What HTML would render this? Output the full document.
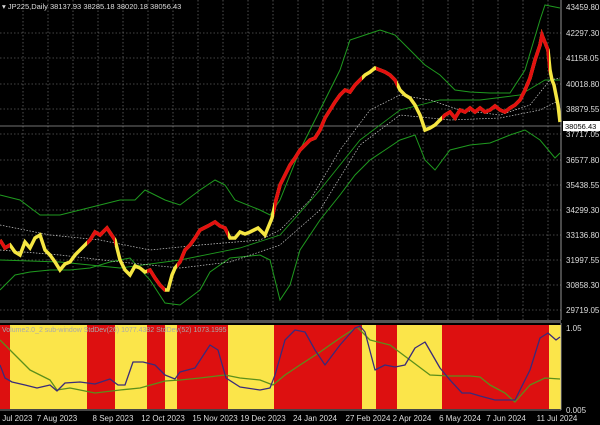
<!DOCTYPE html>
<html><head><meta charset="utf-8"><style>
body{margin:0;background:#000;width:600px;height:425px;overflow:hidden;font-family:"Liberation Sans",sans-serif}
svg{display:block}
text{font-family:"Liberation Sans",sans-serif;font-size:8px;fill:#ddd}
</style></head><body>
<svg width="600" height="425" viewBox="0 0 600 425">
<defs>
<clipPath id="red"><rect x="0" y="0" width="10" height="320"/><rect x="87" y="0" width="28" height="320"/><rect x="147" y="0" width="18" height="320"/><rect x="177" y="0" width="51" height="320"/><rect x="274" y="0" width="88" height="320"/><rect x="376" y="0" width="21" height="320"/><rect x="442" y="0" width="107" height="320"/></clipPath>
<clipPath id="main"><rect x="0" y="0" width="561" height="320"/></clipPath>
</defs>
<rect width="600" height="425" fill="#000"/>
<g stroke="#aaa" stroke-width="0.6" stroke-dasharray="1.5,2" opacity="0.8">
<line x1="0" y1="33" x2="561" y2="33"/><line x1="0" y1="58" x2="561" y2="58"/><line x1="0" y1="84" x2="561" y2="84"/><line x1="0" y1="109" x2="561" y2="109"/><line x1="0" y1="134" x2="561" y2="134"/><line x1="0" y1="160" x2="561" y2="160"/><line x1="0" y1="185" x2="561" y2="185"/><line x1="0" y1="210" x2="561" y2="210"/><line x1="0" y1="235" x2="561" y2="235"/><line x1="0" y1="260" x2="561" y2="260"/><line x1="0" y1="285" x2="561" y2="285"/><line x1="0" y1="310" x2="561" y2="310"/>
<line x1="23" y1="0" x2="23" y2="320"/><line x1="48" y1="0" x2="48" y2="320"/><line x1="73" y1="0" x2="73" y2="320"/><line x1="98" y1="0" x2="98" y2="320"/><line x1="123" y1="0" x2="123" y2="320"/><line x1="148" y1="0" x2="148" y2="320"/><line x1="173" y1="0" x2="173" y2="320"/><line x1="198" y1="0" x2="198" y2="320"/><line x1="223" y1="0" x2="223" y2="320"/><line x1="248" y1="0" x2="248" y2="320"/><line x1="273" y1="0" x2="273" y2="320"/><line x1="298" y1="0" x2="298" y2="320"/><line x1="323" y1="0" x2="323" y2="320"/><line x1="348" y1="0" x2="348" y2="320"/><line x1="373" y1="0" x2="373" y2="320"/><line x1="398" y1="0" x2="398" y2="320"/><line x1="423" y1="0" x2="423" y2="320"/><line x1="448" y1="0" x2="448" y2="320"/><line x1="473" y1="0" x2="473" y2="320"/><line x1="498" y1="0" x2="498" y2="320"/><line x1="523" y1="0" x2="523" y2="320"/><line x1="548" y1="0" x2="548" y2="320"/>
</g>
<line x1="0" y1="126" x2="561" y2="126" stroke="#999" stroke-width="0.8"/>
<g clip-path="url(#main)" fill="none">
<polyline stroke="#1f9a1f" stroke-width="1" points="0,195 20,200 40,215 60,215 80,210 100,205 120,200 135,200 145,190 165,200 180,205 200,190 215,180 225,185 235,200 260,210 270,215 280,200 300,150 320,110 340,70 350,40 365,35 380,30 395,35 410,50 425,65 440,75 455,90 470,92 490,93 510,93 525,70 540,20 545,5 555,7 560,8"/>
<polyline stroke="#1f9a1f" stroke-width="1" points="0,290 15,275 30,272 50,270 70,270 90,268 110,262 130,258 150,280 165,303 180,305 200,290 210,272 230,258 260,255 270,260 280,300 290,285 300,250 320,220 340,195 355,175 370,160 385,150 400,140 415,135 425,160 435,170 450,150 470,145 490,143 510,135 525,130 540,140 555,158 560,153"/>
<polyline stroke="#1f9a1f" stroke-width="0.9" points="0,260 60,262 120,268 180,260 240,248 280,235 320,190 360,140 400,110 440,100 480,100 520,95 545,80 560,80"/>
<polyline stroke="#ccc" stroke-width="0.7" stroke-dasharray="1.5,1.5" points="0,225 50,235 100,240 150,250 200,245 260,240 280,230 310,200 340,150 370,110 400,95 430,100 460,110 500,115 530,105 550,80 560,78"/>
<polyline stroke="#ccc" stroke-width="0.7" stroke-dasharray="1.5,1.5" points="0,250 60,255 120,262 180,268 230,262 280,245 320,210 360,145 400,115 450,120 500,118 540,110 560,100"/>
</g>
<g fill="none" stroke-linejoin="miter" stroke-width="3.5">
<polyline stroke="#f5e642" points="0,240 5,248 10,245 15,252 20,255 25,242 30,248 35,238 40,235 45,250 50,255 55,262 60,270 65,264 70,262 75,255 80,250 85,245 90,240 95,232 100,235 107,228 115,240 120,260 125,270 130,275 135,266 140,268 145,272 150,270 155,278 160,285 165,290 168,290 172,275 175,268 180,262 185,250 190,245 195,238 200,230 208,226 215,222 220,226 225,228 230,238 235,238 240,232 245,234 250,232 258,228 265,235 272,218 276,200 280,185 285,175 290,165 295,158 300,150 305,145 310,140 315,138 320,130 325,118 330,110 335,102 340,95 345,90 350,92 355,85 360,80 365,75 370,72 375,68 380,70 385,72 390,75 395,80 400,90 405,95 410,98 415,105 420,115 425,130 430,128 435,125 440,120 445,115 450,112 455,118 460,110 465,112 470,108 475,112 480,108 485,112 490,110 495,106 500,110 505,112 510,108 515,105 520,100 525,90 530,78 535,60 540,45 542,35 546,45 548,50 550,70 552,80 554,85 556,95 558,105 560,122"/>
<polyline stroke="#e31010" clip-path="url(#red)" points="0,240 5,248 10,245 15,252 20,255 25,242 30,248 35,238 40,235 45,250 50,255 55,262 60,270 65,264 70,262 75,255 80,250 85,245 90,240 95,232 100,235 107,228 115,240 120,260 125,270 130,275 135,266 140,268 145,272 150,270 155,278 160,285 165,290 168,290 172,275 175,268 180,262 185,250 190,245 195,238 200,230 208,226 215,222 220,226 225,228 230,238 235,238 240,232 245,234 250,232 258,228 265,235 272,218 276,200 280,185 285,175 290,165 295,158 300,150 305,145 310,140 315,138 320,130 325,118 330,110 335,102 340,95 345,90 350,92 355,85 360,80 365,75 370,72 375,68 380,70 385,72 390,75 395,80 400,90 405,95 410,98 415,105 420,115 425,130 430,128 435,125 440,120 445,115 450,112 455,118 460,110 465,112 470,108 475,112 480,108 485,112 490,110 495,106 500,110 505,112 510,108 515,105 520,100 525,90 530,78 535,60 540,45 542,35 546,45 548,50 550,70 552,80 554,85 556,95 558,105 560,122"/>
</g>
<line x1="561" y1="0" x2="561" y2="320" stroke="#bbb" stroke-width="0.8"/>
<rect x="0" y="320" width="561" height="3" fill="#555"/>
<rect x="0" y="325" width="561" height="84" fill="#dd1010"/>
<g fill="#fbe54a"><rect x="10" y="325" width="77" height="84"/><rect x="115" y="325" width="32" height="84"/><rect x="165" y="325" width="12" height="84"/><rect x="228" y="325" width="46" height="84"/><rect x="362" y="325" width="14" height="84"/><rect x="397" y="325" width="45" height="84"/><rect x="549" y="325" width="12" height="84"/></g>
<g fill="none" stroke-width="1.3" stroke-linejoin="round">
<polyline stroke="#5b8f1a" points="0,340 15,355 30,370 50,380 57,390 70,388 95,393 120,390 140,388 165,381 180,380 200,378 225,375 240,378 260,380 273,385 285,375 300,365 320,352 340,338 357,327 370,340 390,345 410,360 430,375 450,376 470,376 480,377 490,385 505,393 515,402 530,385 545,378 560,379"/>
<polyline stroke="#3a2a7a" points="0,365 5,378 12,382 25,385 37,388 50,385 57,391 65,383 80,382 95,384 110,379 118,385 125,385 133,362 143,362 155,365 165,375 175,379 180,372 195,368 210,345 218,350 226,378 240,387 260,390 270,388 275,375 285,340 295,330 305,332 315,350 325,365 340,345 355,328 360,326 365,332 375,370 385,365 395,367 405,365 415,348 425,342 440,368 450,380 462,393 470,393 480,396 495,400 515,400 530,370 540,338 548,333 556,340 560,337"/>
</g>
<text x="2" y="332" style="font-size:7px;fill:#aaa">Volume2.0_2 sub-window StdDev(26) 1077.4382 StdDev(52) 1073.1995</text>
<line x1="561" y1="323" x2="561" y2="410" stroke="#bbb" stroke-width="0.8"/>
<line x1="0" y1="410" x2="561" y2="410" stroke="#bbb" stroke-width="0.8"/>
<text x="2" y="9" style="font-size:7.5px">▾ JP225,Daily  38137.93 38285.18 38020.18 38056.43</text>
<g style="font-size:7.5px">
<text x="566" y="10">43459.80</text><text x="566" y="36">42297.30</text><text x="566" y="61">41158.05</text><text x="566" y="87">40018.80</text><text x="566" y="112">38879.55</text><text x="566" y="137">37717.05</text><text x="566" y="163">36577.80</text><text x="566" y="188">35438.55</text><text x="566" y="213">34299.30</text><text x="566" y="238">33136.80</text><text x="566" y="263">31997.55</text><text x="566" y="288">30858.30</text><text x="566" y="313">29719.05</text>
<text x="566" y="331">1.05</text><text x="566" y="413">0.005</text>
</g>
<rect x="563" y="121" width="37" height="10" fill="#fff"/>
<text x="565" y="129" style="font-size:7.5px;fill:#000">38056.43</text>
<g style="font-size:7.5px" text-anchor="middle">
<text x="14" y="421">4 Jul 2023</text><text x="57" y="421">7 Aug 2023</text><text x="113" y="421">8 Sep 2023</text><text x="163" y="421">12 Oct 2023</text><text x="215" y="421">15 Nov 2023</text><text x="263" y="421">19 Dec 2023</text><text x="315" y="421">24 Jan 2024</text><text x="368" y="421">27 Feb 2024</text><text x="412" y="421">2 Apr 2024</text><text x="460" y="421">6 May 2024</text><text x="506" y="421">7 Jun 2024</text><text x="557" y="421">11 Jul 2024</text>
</g>
</svg>
</body></html>
